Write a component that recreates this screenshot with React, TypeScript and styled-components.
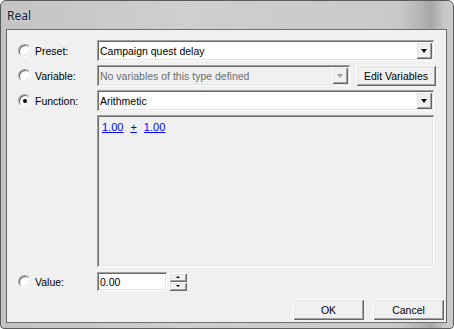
import React from "react";
import styled, { createGlobalStyle } from "styled-components";

const GlobalStyle = createGlobalStyle`
  body {
    margin: 0;
    font-family: "Liberation Sans", Arial, sans-serif;
  }
`;

const sunken = `
  box-shadow: inset 1px 1px 0 #a0a0a0, inset -1px -1px 0 #ffffff,
    inset 2px 2px 0 #696969, inset -2px -2px 0 #e3e3e3;
`;

const raised = `
  box-shadow: inset 1px 1px 0 #ffffff, inset -1px -1px 0 #696969,
    inset 2px 2px 0 #e3e3e3, inset -2px -2px 0 #a0a0a0;
`;

const Window = styled.div`
  width: 454px;
  height: 329px;
  box-sizing: border-box;
  border: 1px solid #5c5c5c;
  border-radius: 6px 6px 4px 4px;
  background: linear-gradient(
    to right,
    #c3c3c3 0%,
    #cfcfcf 40%,
    #c9c9c9 88%,
    #b4b4b4 93%,
    #a6a6a6 95%,
    #c6c6c6 98%,
    #cbcbcb 100%
  );
  padding: 0 6px 5px 5px;
  display: flex;
  flex-direction: column;
  overflow: hidden;
`;

const TitleBar = styled.div`
  height: 28px;
  display: flex;
  align-items: center;
  padding: 1px 0 0 1px;
  box-sizing: border-box;
  font-family: "Noto Sans", "Liberation Sans", sans-serif;
  font-size: 12px;
  color: #10223f;
  text-shadow: 0 0 6px rgba(255, 255, 255, 0.7);
`;

const Client = styled.div`
  flex: 1;
  border: 1px solid #6a6a6a;
  background: #f0f0f0;
  padding: 10px 2px 2px 11px;
  display: flex;
  flex-direction: column;
  font-size: 10.5px;
  color: #000;
`;

const Rows = styled.div`
  display: flex;
  flex-direction: column;
  gap: 4px;
`;

const Row = styled.div`
  display: flex;
  align-items: center;
  height: 21px;
`;

const Choice = styled.label`
  width: 79px;
  flex: none;
  display: flex;
  align-items: center;
  gap: 4px;
`;

const Radio = styled.span<{ $checked?: boolean }>`
  position: relative;
  width: 13px;
  height: 13px;
  flex: none;
  box-sizing: border-box;
  border-radius: 50%;
  border: 1px solid;
  border-color: #a0a0a0 #ffffff #ffffff #a0a0a0;
  background: #ffffff;
  box-shadow: inset 1px 1px 0 #696969, inset -1px -1px 0 #e3e3e3;

  &::after {
    content: "";
    display: ${(p) => (p.$checked ? "block" : "none")};
    position: absolute;
    left: 50%;
    top: 50%;
    width: 4px;
    height: 4px;
    margin: -2px 0 0 -2px;
    border-radius: 50%;
    background: #000;
  }
`;

const Combo = styled.div<{ $width: number; $disabled?: boolean }>`
  width: ${(p) => p.$width}px;
  height: 21px;
  box-sizing: border-box;
  padding: 2px 2px 2px 3px;
  display: flex;
  align-items: center;
  background: ${(p) => (p.$disabled ? "#f0f0f0" : "#ffffff")};
  color: ${(p) => (p.$disabled ? "#6d6d6d" : "#000")};
  ${sunken}
`;

const ComboText = styled.span`
  flex: 1;
  white-space: nowrap;
  overflow: hidden;
`;

const DropButton = styled.span<{ $disabled?: boolean }>`
  width: 16px;
  height: 17px;
  flex: none;
  background: #f0f0f0;
  display: flex;
  align-items: center;
  justify-content: center;
  ${raised}

  &::before {
    content: "";
    width: 0;
    height: 0;
    border-left: 3.5px solid transparent;
    border-right: 3.5px solid transparent;
    border-top: 4px solid ${(p) => (p.$disabled ? "#a0a0a0" : "#000")};
    margin-top: 1px;
  }
`;

const Button = styled.button<{ $width: number }>`
  width: ${(p) => p.$width}px;
  height: 21px;
  padding: 0;
  border: none;
  background: #f0f0f0;
  font-family: inherit;
  font-size: 10.5px;
  color: #000;
  ${raised}
`;

const VariableField = styled.div`
  display: flex;
  gap: 6px;
`;

const FunctionBox = styled.div`
  margin-left: 79px;
  width: 337px;
  height: 152px;
  box-sizing: border-box;
  padding: 6px 5px;
  background: #f0f0f0;
  display: flex;
  align-items: flex-start;
  gap: 7px;
  font-size: 11px;
  ${sunken}
`;

const Token = styled.a`
  color: #0000ff;
  text-decoration: underline;
  cursor: pointer;
`;

const ValueRow = styled(Row)`
  margin-top: 5px;
  height: 19px;
`;

const SpinInput = styled.div`
  width: 70px;
  height: 19px;
  box-sizing: border-box;
  padding: 2px 3px;
  background: #ffffff;
  display: flex;
  align-items: center;
  ${sunken}
`;

const Spin = styled.div`
  margin-left: 2px;
  width: 18px;
  height: 18px;
  display: flex;
  flex-direction: column;
`;

const SpinHalf = styled.span<{ $up?: boolean }>`
  flex: 1;
  background: #f0f0f0;
  display: flex;
  align-items: center;
  justify-content: center;
  ${raised}

  &::before {
    content: "";
    width: 0;
    height: 0;
    border-left: 2px solid transparent;
    border-right: 2px solid transparent;
    ${(p) =>
      p.$up ? "border-bottom: 2px solid #000;" : "border-top: 2px solid #000;"}
  }
`;

const Footer = styled.div`
  margin-top: auto;
  display: flex;
  justify-content: flex-end;
  gap: 9px;
`;

export default function App() {
  return (
    <>
      <GlobalStyle />
      <Window>
        <TitleBar>Real</TitleBar>
        <Client>
          <Rows>
            <Row>
              <Choice>
                <Radio />
                Preset:
              </Choice>
              <Combo $width={337}>
                <ComboText>Campaign quest delay</ComboText>
                <DropButton />
              </Combo>
            </Row>
            <Row>
              <Choice>
                <Radio />
                Variable:
              </Choice>
              <VariableField>
                <Combo $width={253} $disabled>
                  <ComboText>No variables of this type defined</ComboText>
                  <DropButton $disabled />
                </Combo>
                <Button $width={80}>Edit Variables</Button>
              </VariableField>
            </Row>
            <Row>
              <Choice>
                <Radio $checked />
                Function:
              </Choice>
              <Combo $width={337}>
                <ComboText>Arithmetic</ComboText>
                <DropButton />
              </Combo>
            </Row>
            <FunctionBox>
              <Token>1.00</Token>
              <Token>+</Token>
              <Token>1.00</Token>
            </FunctionBox>
          </Rows>
          <ValueRow>
            <Choice>
              <Radio />
              Value:
            </Choice>
            <SpinInput>0.00</SpinInput>
            <Spin>
              <SpinHalf $up />
              <SpinHalf />
            </Spin>
          </ValueRow>
          <Footer>
            <Button $width={71}>OK</Button>
            <Button $width={71}>Cancel</Button>
          </Footer>
        </Client>
      </Window>
    </>
  );
}
